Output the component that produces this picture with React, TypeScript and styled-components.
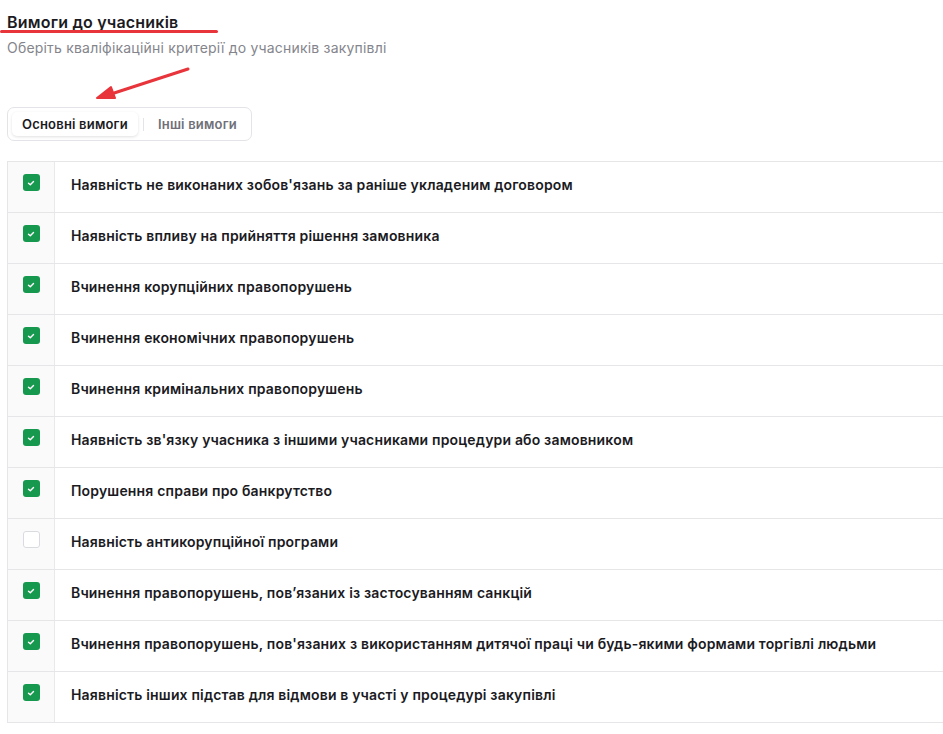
import styled, { createGlobalStyle } from "styled-components";

const GlobalStyle = createGlobalStyle`
  html, body {
    margin: 0;
    padding: 0;
    background: #ffffff;
    overflow: hidden;
  }
  body {
    font-family: Inter, "Noto Sans", "Liberation Sans", sans-serif;
  }
`;

const Page = styled.div`
  position: relative;
  padding: 12px 0 0 7px;
`;

const Header = styled.div`
  display: flex;
  flex-direction: column;
  row-gap: 7px;
`;

const Title = styled.h2`
  margin: 0;
  font-size: 16px;
  line-height: 20px;
  letter-spacing: 0.2px;
  font-weight: 600;
  color: #1b1b1f;
`;

const Subtitle = styled.p`
  margin: 0;
  font-size: 14px;
  line-height: 18px;
  letter-spacing: 0.2px;
  color: #84858c;
`;

const Underline = styled.div`
  position: absolute;
  left: 0;
  top: 30px;
  width: 218px;
  height: 3px;
  border-radius: 2px;
  background: #e8343b;
`;

const Arrow = styled.svg`
  position: absolute;
  left: 90px;
  top: 62px;
`;

const Tabs = styled.div`
  display: inline-flex;
  align-items: center;
  margin-top: 50px;
  padding: 4px;
  border: 1px solid #e3e4e8;
  border-radius: 7px;
  background: #fff;
`;

const Tab = styled.button<{ $active?: boolean }>`
  border: 0;
  height: 24px;
  padding: 0 10px;
  border-radius: 5px;
  font-family: inherit;
  font-size: 13px;
  letter-spacing: 0.2px;
  font-weight: 600;
  cursor: pointer;
  color: ${p => (p.$active ? "#1b1b1f" : "#6f7079")};
  background: ${p => (p.$active ? "#ffffff" : "transparent")};
  box-shadow: ${p => (p.$active ? "0 1px 3px rgba(0,0,0,.12)" : "none")};
`;

const TabDivider = styled.span`
  width: 1px;
  height: 13px;
  margin: 0 4px 0 5px;
  background: #e3e4e8;
`;

const Table = styled.div`
  margin-top: 20px;
  width: 1000px;
  border: 1px solid #e6e6e8;
  border-bottom: 0;
`;

const Row = styled.div`
  display: grid;
  grid-template-columns: 47px 1fr;
  height: 50px;
  border-bottom: 1px solid #e6e6e8;
`;

const CheckCell = styled.div`
  display: flex;
  justify-content: center;
  padding-top: 12px;
  background: #fafafa;
  border-right: 1px solid #e9e9ec;
`;

const Box = styled.span<{ $checked: boolean }>`
  display: flex;
  align-items: center;
  justify-content: center;
  width: 17px;
  height: 17px;
  box-sizing: border-box;
  border-radius: 3px;
  background: ${p => (p.$checked ? "#16994f" : "#ffffff")};
  border: ${p => (p.$checked ? "0" : "1px solid #d9dbe1")};
`;

const Label = styled.div`
  padding: 14px 0 0 16px;
  font-size: 14px;
  line-height: 18px;
  letter-spacing: 0.17px;
  font-weight: 600;
  color: #1b1b1f;
`;

const items = [
  { text: "Наявність не виконаних зобов'язань за раніше укладеним договором", checked: true },
  { text: "Наявність впливу на прийняття рішення замовника", checked: true },
  { text: "Вчинення корупційних правопорушень", checked: true },
  { text: "Вчинення економічних правопорушень", checked: true },
  { text: "Вчинення кримінальних правопорушень", checked: true },
  { text: "Наявність зв'язку учасника з іншими учасниками процедури або замовником", checked: true },
  { text: "Порушення справи про банкрутство", checked: true },
  { text: "Наявність антикорупційної програми", checked: false },
  { text: "Вчинення правопорушень, пов’язаних із застосуванням санкцій", checked: true },
  { text: "Вчинення правопорушень, пов'язаних з використанням дитячої праці чи будь-якими формами торгівлі людьми", checked: true },
  { text: "Наявність інших підстав для відмови в участі у процедурі закупівлі", checked: true },
];

function App() {
  return (
    <Page>
      <GlobalStyle />
      <Header>
        <Title>Вимоги до учасників</Title>
        <Subtitle>Оберіть кваліфікаційні критерії до учасників закупівлі</Subtitle>
      </Header>
      <Underline />
      <Arrow width="104" height="42" viewBox="0 0 104 42">
        <path d="M98 7 L18 33" stroke="#e8343b" strokeWidth="3" strokeLinecap="round" />
        <path d="M7 36 L21 25 L25 36 Z" fill="#e8343b" stroke="#e8343b" strokeWidth="2" strokeLinejoin="round" />
      </Arrow>
      <div>
        <Tabs>
          <Tab $active>Основні вимоги</Tab>
          <TabDivider />
          <Tab>Інші вимоги</Tab>
        </Tabs>
      </div>
      <Table>
        {items.map(({ text, checked }) => (
          <Row key={text}>
            <CheckCell>
              <Box $checked={checked}>
                {checked && (
                  <svg width="8" height="8" viewBox="0 0 8 8">
                    <path d="M1.5 4.2 L3.3 5.8 L6.5 2.4" stroke="#fff" strokeWidth="1.4" fill="none" strokeLinecap="round" strokeLinejoin="round" />
                  </svg>
                )}
              </Box>
            </CheckCell>
            <Label>{text}</Label>
          </Row>
        ))}
      </Table>
    </Page>
  );
}

export default App;
